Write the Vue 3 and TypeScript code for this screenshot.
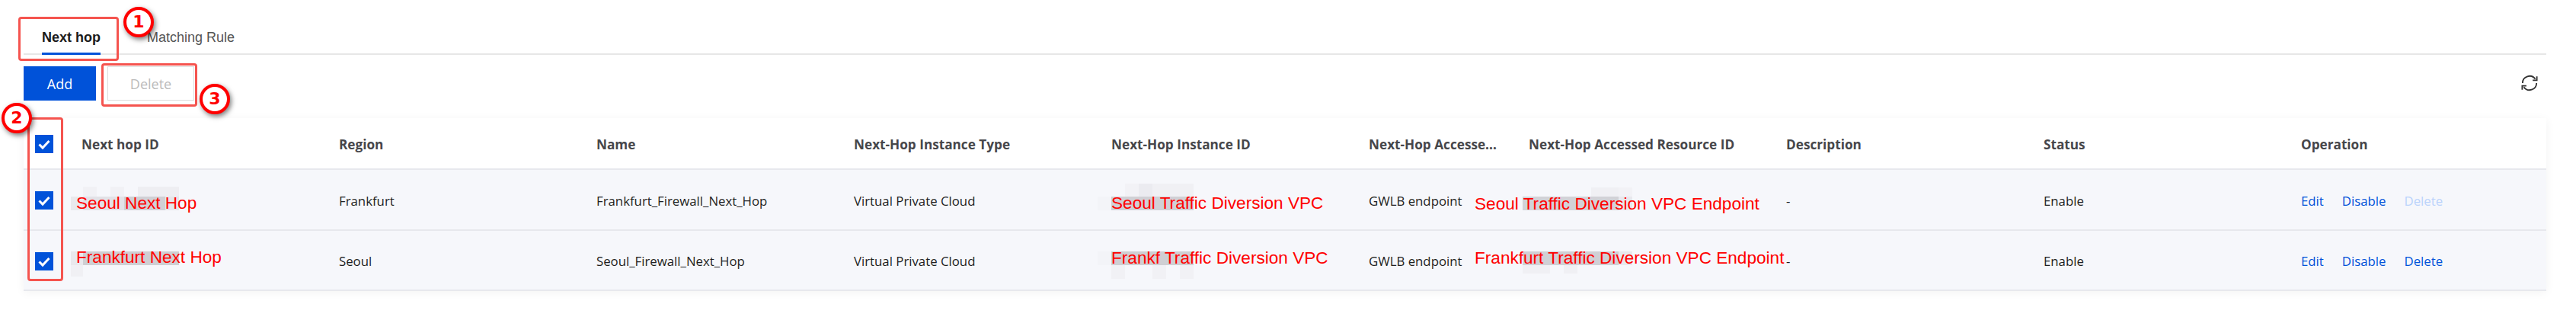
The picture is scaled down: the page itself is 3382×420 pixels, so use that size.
<script setup lang="ts">
interface Row {
  region: string
  name: string
  type: string
  accessed: string
  description: string
  status: string
  deletable: boolean
}

const columns = [
  'Next hop ID',
  'Region',
  'Name',
  'Next-Hop Instance Type',
  'Next-Hop Instance ID',
  'Next-Hop Accesse...',
  'Next-Hop Accessed Resource ID',
  'Description',
  'Status',
  'Operation',
]

const rows: Row[] = [
  {
    region: 'Frankfurt',
    name: 'Frankfurt_Firewall_Next_Hop',
    type: 'Virtual Private Cloud',
    accessed: 'GWLB endpoint',
    description: '-',
    status: 'Enable',
    deletable: false,
  },
  {
    region: 'Seoul',
    name: 'Seoul_Firewall_Next_Hop',
    type: 'Virtual Private Cloud',
    accessed: 'GWLB endpoint',
    description: '-',
    status: 'Enable',
    deletable: true,
  },
]

// Red notes pasted over the redacted cells of the screenshot
const notes = [
  { text: 'Seoul Next Hop', x: 100, y: 267 },
  { text: 'Frankfurt Next Hop', x: 100, y: 338 },
  { text: 'Seoul Traffic Diversion VPC', x: 1459, y: 267 },
  { text: 'Frankf Traffic Diversion VPC', x: 1459, y: 339 },
  { text: 'Seoul Traffic Diversion VPC Endpoint', x: 1936, y: 268 },
  { text: 'Frankfurt Traffic Diversion VPC Endpoint', x: 1936, y: 339 },
]

// Mosaic left from the redaction, blocks are 18px wide
const patches = [
  { x: 93, y: 258, w: 16, h: 18, c: '#e9e9ed' },
  { x: 109, y: 258, w: 54, h: 18, c: '#e2e2e7' },
  { x: 163, y: 258, w: 54, h: 18, c: '#d0d0d5' },
  { x: 217, y: 258, w: 18, h: 18, c: '#e6e6eb' },
  { x: 109, y: 245, w: 18, h: 13, c: '#f1f1f5' },
  { x: 145, y: 245, w: 18, h: 13, c: '#f1f1f5' },
  { x: 181, y: 245, w: 54, h: 13, c: '#eeeef2' },
  { x: 93, y: 330, w: 16, h: 18, c: '#e9e9ed' },
  { x: 109, y: 330, w: 126, h: 18, c: '#cfcfd3' },
  { x: 93, y: 348, w: 16, h: 15, c: '#f0f0f4' },

  { x: 1441, y: 258, w: 18, h: 18, c: '#f3f4f8' },
  { x: 1459, y: 258, w: 108, h: 18, c: '#d0d0d5' },
  { x: 1477, y: 241, w: 18, h: 17, c: '#f2f2f6' },
  { x: 1495, y: 241, w: 18, h: 17, c: '#ebebf0' },
  { x: 1513, y: 241, w: 54, h: 17, c: '#f0f0f4' },
  { x: 1441, y: 330, w: 18, h: 18, c: '#f3f4f8' },
  { x: 1459, y: 330, w: 108, h: 18, c: '#cfcfd3' },
  { x: 1459, y: 348, w: 18, h: 18, c: '#f1f1f5' },
  { x: 1513, y: 348, w: 18, h: 18, c: '#f1f1f5' },
  { x: 1549, y: 348, w: 18, h: 18, c: '#f1f1f5' },

  { x: 1999, y: 258, w: 126, h: 18, c: '#d2d2d7' },
  { x: 2125, y: 258, w: 18, h: 18, c: '#e8e8ed' },
  { x: 2089, y: 246, w: 36, h: 12, c: '#f0f0f4' },
  { x: 2125, y: 246, w: 18, h: 12, c: '#f2f2f6' },
  { x: 1999, y: 330, w: 126, h: 18, c: '#d0d0d5' },
  { x: 2125, y: 330, w: 18, h: 18, c: '#e8e8ed' },
  { x: 1999, y: 348, w: 36, h: 11, c: '#f0f0f4' },
  { x: 2053, y: 348, w: 18, h: 11, c: '#f0f0f4' },
]
</script>

<template>
  <div class="page">
    <div class="tabs">
      <span class="tab active">Next hop</span>
      <span class="tab">Matching Rule</span>
    </div>

    <div class="toolbar">
      <button class="btn primary">Add</button>
      <button class="btn disabled">Delete</button>
      <svg class="refresh" viewBox="0 0 24 24" fill="none" stroke="#333" stroke-width="2">
        <path d="M2 12a10 10 0 0 1 18.2-5.7" />
        <path d="M22 12a10 10 0 0 1-18.2 5.7" />
        <path d="M22.5 2.5v5.5h-6" />
        <path d="M1.5 21.5v-5.5h6" />
      </svg>
    </div>

    <table class="grid">
      <colgroup>
        <col class="col-check" />
        <col v-for="n in 5" :key="n" class="col-wide" />
        <col class="col-narrow" />
        <col v-for="n in 4" :key="'r' + n" class="col-wide" />
      </colgroup>
      <thead>
        <tr>
          <th><span class="check"><svg viewBox="0 0 24 24"><path d="M5.5 12.5l4.5 4.5 8.5-9" /></svg></span></th>
          <th v-for="col in columns" :key="col">{{ col }}</th>
        </tr>
      </thead>
      <tbody>
        <tr v-for="row in rows" :key="row.name">
          <td><span class="check"><svg viewBox="0 0 24 24"><path d="M5.5 12.5l4.5 4.5 8.5-9" /></svg></span></td>
          <td></td>
          <td>{{ row.region }}</td>
          <td>{{ row.name }}</td>
          <td>{{ row.type }}</td>
          <td></td>
          <td>{{ row.accessed }}</td>
          <td></td>
          <td>{{ row.description }}</td>
          <td>{{ row.status }}</td>
          <td>
            <div class="ops">
              <a>Edit</a>
              <a>Disable</a>
              <a :class="{ off: !row.deletable }">Delete</a>
            </div>
          </td>
        </tr>
      </tbody>
    </table>

    <!-- callouts drawn over the page -->
    <i
      v-for="(p, i) in patches"
      :key="i"
      class="patch"
      :style="{ left: p.x + 'px', top: p.y + 'px', width: p.w + 'px', height: p.h + 'px', background: p.c }"
    />
    <span
      v-for="note in notes"
      :key="note.text"
      class="note"
      :style="{ left: note.x + 'px', top: note.y + 'px' }"
    >{{ note.text }}</span>

    <div class="box box-1"></div>
    <div class="box box-2"></div>
    <div class="box box-3"></div>
    <div class="badge badge-1">1</div>
    <div class="badge badge-2">2</div>
    <div class="badge badge-3">3</div>
  </div>
</template>

<style>
html,
body {
  margin: 0;
  background: #fff;
}
</style>

<style scoped>
.page {
  position: relative;
  width: 3382px;
  height: 420px;
  padding: 0 39px 0 31px;
  box-sizing: border-box;
  overflow: hidden;
  font-family: "Open Sans", "Noto Sans", sans-serif;
  font-size: 16.8px;
  color: #1f1f22;
}

.tabs {
  display: flex;
  height: 72px;
  padding-top: 28px;
  box-sizing: border-box;
  border-bottom: 2px solid #e7e7e7;
  font-family: "Liberation Sans", Arial, sans-serif;
  font-size: 18px;
}

.tab {
  height: 44px;
  line-height: 42px;
  box-sizing: border-box;
  margin-left: 24px;
  margin-right: 37px;
  color: #555;
}

.tab.active {
  font-weight: 700;
  color: #1c1c1c;
  border-bottom: 3px solid #0052d9;
}

.toolbar {
  display: flex;
  align-items: flex-start;
  gap: 15px;
  height: 83px;
  padding-top: 15px;
  box-sizing: border-box;
}

.btn {
  height: 45px;
  font-family: inherit;
  font-size: 18px;
  border: 1px solid transparent;
  padding: 0;
}

.btn.primary {
  width: 95px;
  background: #0052d9;
  color: #fff;
}

.btn.disabled {
  width: 114px;
  background: #fff;
  border-color: #dcdcdc;
  color: #bbb;
}

.refresh {
  width: 22px;
  height: 22px;
  margin-left: auto;
  margin-top: 11px;
  margin-right: 11px;
}

.grid {
  width: 3312px;
  table-layout: fixed;
  border-collapse: collapse;
  box-shadow: 0 2px 12px rgba(0, 0, 0, 0.05);
}

.col-check {
  width: 60px;
}

.col-wide {
  width: 338px;
}

.col-narrow {
  width: 210px;
}

th,
td {
  box-sizing: border-box;
  padding: 2px 0 0 16px;
  text-align: left;
  white-space: nowrap;
  overflow: hidden;
}

th {
  height: 67px;
  font-size: 17.2px;
  font-weight: 700;
  color: #46464a;
  border-bottom: 2px solid #e7e8ed;
}

td {
  height: 80px;
  background: #f6f7fb;
  border-bottom: 2px solid #e7e8ed;
}

tr:last-child td {
  height: 79px;
}

.check {
  display: block;
  width: 24px;
  height: 24px;
  margin-left: -1px;
  background: #0052d9;
}

.check svg {
  display: block;
  fill: none;
  stroke: #fff;
  stroke-width: 3;
}

.ops {
  display: flex;
  gap: 24px;
}

.ops a {
  color: #0052d9;
}

.ops a.off {
  color: #bbd3fb;
}

.patch {
  position: absolute;
}

.note {
  position: absolute;
  transform: translateY(-50%);
  font-family: "Liberation Sans", Arial, sans-serif;
  font-size: 22.6px;
  line-height: 1;
  white-space: nowrap;
  color: #f00;
}

.box {
  position: absolute;
  box-sizing: border-box;
  border: 3px solid #f5544f;
  border-radius: 4px;
}

.box-1 {
  left: 24px;
  top: 22px;
  width: 132px;
  height: 58px;
}

.box-2 {
  left: 36px;
  top: 154px;
  width: 47px;
  height: 215px;
}

.box-3 {
  left: 133px;
  top: 83px;
  width: 126px;
  height: 57px;
}

.badge {
  position: absolute;
  width: 40px;
  height: 40px;
  box-sizing: border-box;
  border: 4px solid #f00;
  border-radius: 50%;
  background: #fff;
  box-shadow: 2px 3px 6px rgba(0, 0, 0, 0.5);
  color: #f00;
  font-family: "DejaVu Sans", sans-serif;
  font-weight: 700;
  font-size: 22px;
  line-height: 31px;
  text-align: center;
}

.badge-1 {
  left: 162px;
  top: 9px;
}

.badge-2 {
  left: 2px;
  top: 135px;
}

.badge-3 {
  left: 262px;
  top: 110px;
}
</style>
